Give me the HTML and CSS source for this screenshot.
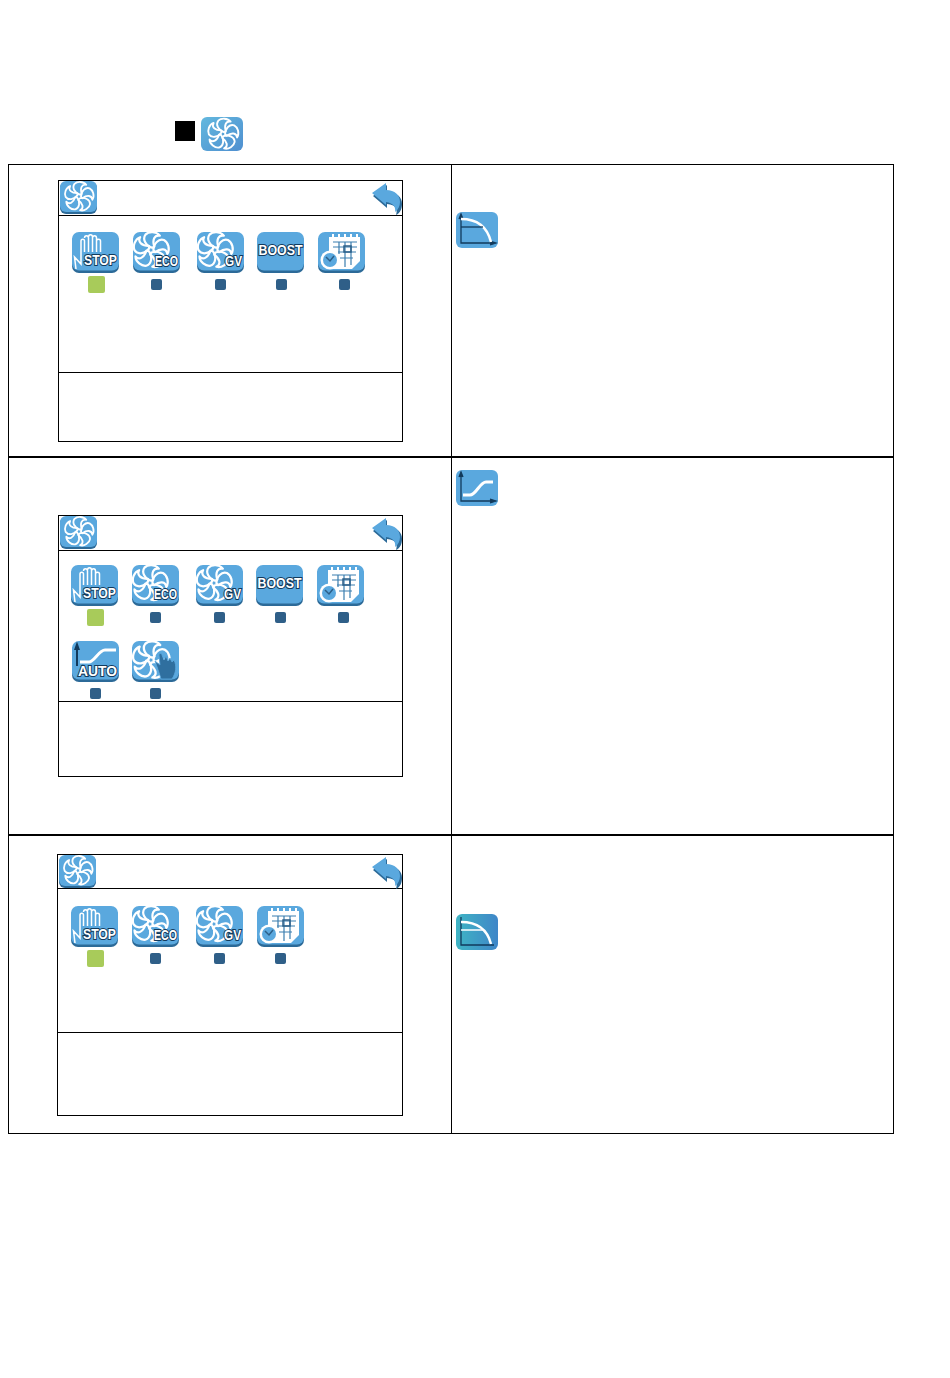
FILE: index.html
```html
<!DOCTYPE html>
<html lang="en">
<head>
<meta charset="utf-8">
<title>Fan modes</title>
<link rel="stylesheet" href="styles.css">
</head>
<body>
<svg class="defs" width="0" height="0" aria-hidden="true">
  <defs>
    <linearGradient id="headGrad" x1="0" y1="0" x2="1" y2="1">
      <stop offset="0" stop-color="#63b8de"/><stop offset="1" stop-color="#4f8fd0"/>
    </linearGradient>
    <linearGradient id="tealGrad" x1="0" y1="0" x2="1" y2="0">
      <stop offset="0" stop-color="#3fb4c4"/><stop offset="1" stop-color="#3f86c8"/>
    </linearGradient>
    <g id="blade"><path d="M1,-2C-5,-4 -8,-10 -5,-14C-2,-17 5,-17 8,-13C3,-14 1,-9 3,-3Z"/></g>
    <g id="fanShape" fill="none" stroke="#fff" stroke-width="2" stroke-linejoin="round">
      <use href="#blade"/>
      <use href="#blade" transform="rotate(72)"/>
      <use href="#blade" transform="rotate(144)"/>
      <use href="#blade" transform="rotate(216)"/>
      <use href="#blade" transform="rotate(288)"/>
    </g>
    <g id="base">
      <rect x="0" y="2" width="47" height="39" rx="7" fill="#2c6a98"/>
      <rect x="0" y="0" width="47" height="38.500" rx="7" fill="#5aa8de"/>
    </g>
    <symbol id="i-head" viewBox="0 0 37 33">
      <rect y="1" width="37" height="32" rx="6" fill="#2c6a98"/>
      <rect width="37" height="31" rx="6" fill="#5aa8de"/>
      <use href="#fanShape" transform="translate(19 15.500) scale(.9)"/>
    </symbol>
    <symbol id="i-stop" viewBox="0 0 47 41">
      <use href="#base"/>
      <path d="M4,37L2.500,25L9,32V9C9,6.500 12.500,6.500 12.500,9V20M12.500,6C12.500,3 16.500,3 16.500,6V20M16.500,5C16.500,2 20.500,2 20.500,5V20M20.500,6C20.500,3 24.500,3 24.500,6V20M24.500,9C24.500,6.500 28.500,6.500 28.500,9V20" fill="none" stroke="#fff" stroke-width="1.500"/>
      <text x="12" y="33" class="ilabel" textLength="33" lengthAdjust="spacingAndGlyphs">STOP</text>
    </symbol>
    <symbol id="i-eco" viewBox="0 0 47 41">
      <use href="#base"/>
      <use href="#fanShape" transform="translate(18 18) scale(1.100)"/>
      <text x="22" y="34" class="ilabel eco" textLength="23" lengthAdjust="spacingAndGlyphs">ECO</text>
    </symbol>
    <symbol id="i-gv" viewBox="0 0 47 41">
      <use href="#base"/>
      <use href="#fanShape" transform="translate(18 18) scale(1.100)"/>
      <text x="28" y="34" class="ilabel eco" textLength="17" lengthAdjust="spacingAndGlyphs">GV</text>
    </symbol>
    <symbol id="i-boost" viewBox="0 0 47 41">
      <use href="#base"/>
      <text x="1.500" y="23" class="ilabel boost" textLength="44" lengthAdjust="spacingAndGlyphs">BOOST</text>
    </symbol>
    <symbol id="i-cal" viewBox="0 0 47 41">
      <use href="#base"/>
      <path d="M11,5H42V29L34,37H14V26L11,24Z" fill="#fff"/>
      <path d="M15,2V7M21,2V7M27,2V7M33,2V7M39,2V7" stroke="#fff" stroke-width="2"/>
      <path d="M15,10H39M15,15H39M20,20H38M22,26H35M21,10V22M27,10V35M33,10V33" stroke="#3b7eaf" stroke-width="1.200"/>
      <rect x="26" y="14" width="7" height="6" fill="none" stroke="#2c5f88" stroke-width="1.500"/>
      <circle cx="12" cy="28" r="9.500" fill="#fff"/>
      <circle cx="12" cy="28" r="7" fill="#5aa8de"/>
      <path d="M8,25L12,29L16,24" fill="none" stroke="#2c5f88" stroke-width="1.500"/>
    </symbol>
    <symbol id="i-auto" viewBox="0 0 47 41">
      <use href="#base"/>
      <path d="M5,0.500L8,9H6V25H4V9H2Z" fill="#123a5c"/>
      <path d="M8,21H17C22,21 27,9 33,9H44" fill="none" stroke="#fff" stroke-width="3"/>
      <text x="6" y="35" class="ilabel" textLength="39" lengthAdjust="spacingAndGlyphs">AUTO</text>
    </symbol>
    <symbol id="i-hand" viewBox="0 0 47 41">
      <use href="#base"/>
      <use href="#fanShape" transform="translate(19 19) scale(1.150)"/>
      <path d="M23,20L28,24L27,14C27,12 30,12 30,14L32,19L34,15L36,20L38,17L40,21L42,19C45,25 44,32 40,38H29C27,31 25,26 23,20Z" fill="#2f6f9f" stroke="#5aa8de" stroke-width=".8"/>
    </symbol>
    <symbol id="i-back" viewBox="0 0 32 33">
      <path d="M16,3V10C26,10 31,15 31,22C31,27 29,31 25,33C27,27 25,23 16,22V26L2,14Z" fill="#2c6a98"/>
      <path d="M15,1V8C24,8 29,13 29,20C29,24 27,28 24,30C25,26 23,21 15,20V23L1,11Z" fill="#5aa8de"/>
    </symbol>
    <g id="axes" fill="none" stroke="#123a5c" stroke-width="1.300">
      <path d="M5,3V31H38"/><path d="M3,7L5,2L7,7M34,29L40,31L34,33" fill="#123a5c"/>
    </g>
    <symbol id="i-curve1" viewBox="0 0 42 36">
      <rect width="42" height="36" rx="6" fill="#5aa8de"/>
      <use href="#axes"/>
      <path d="M5,7C20,7 31,14 35,30" fill="none" stroke="#fff" stroke-width="2.500"/>
      <path d="M5,15H27" stroke="#123a5c" stroke-width="1.300"/>
    </symbol>
    <symbol id="i-curve2" viewBox="0 0 42 36">
      <rect width="42" height="36" rx="6" fill="#5aa8de"/>
      <use href="#axes"/>
      <path d="M7,25H14C20,25 24,12 30,12H37" fill="none" stroke="#fff" stroke-width="3"/>
    </symbol>
    <symbol id="i-curve3" viewBox="0 0 42 36">
      <rect width="42" height="36" rx="6" fill="url(#tealGrad)"/>
      <path d="M5,3V31H38" fill="none" stroke="#123a5c" stroke-width="1.300"/>
      <path d="M5,8C20,8 31,14 35,30" fill="none" stroke="#fff" stroke-width="2.500"/>
      <path d="M5,16H28" stroke="#fff" stroke-width="1.500"/>
    </symbol>
    <symbol id="i-main" viewBox="0 0 42 34">
      <rect width="42" height="34" rx="6" fill="url(#headGrad)"/>
      <use href="#fanShape" transform="translate(22 17) scale(.95)"/>
    </symbol>
  </defs>
</svg>

<div class="title-row">
  <span class="black-box"></span>
  <svg class="main-icon"><use href="#i-main"/></svg>
</div>

<div class="sheet">
  <section class="row row-one">
    <div class="cell cell-left">
      <div class="panel panel-one">
        <header class="panel-head">
          <svg class="head-icon"><use href="#i-head"/></svg>
          <svg class="back-icon"><use href="#i-back"/></svg>
        </header>
        <div class="panel-main main-one">
          <div class="modes">
            <div class="mode"><svg class="mode-icon"><use href="#i-stop"/></svg><span class="led on"></span></div>
            <div class="mode"><svg class="mode-icon"><use href="#i-eco"/></svg><span class="led"></span></div>
            <div class="mode"><svg class="mode-icon"><use href="#i-gv"/></svg><span class="led"></span></div>
            <div class="mode"><svg class="mode-icon"><use href="#i-boost"/></svg><span class="led led-boost"></span></div>
            <div class="mode"><svg class="mode-icon"><use href="#i-cal"/></svg><span class="led led-cal"></span></div>
          </div>
        </div>
        <div class="panel-foot"></div>
      </div>
    </div>
    <div class="cell cell-right right-one"><svg class="curve-icon"><use href="#i-curve1"/></svg></div>
  </section>

  <section class="row row-two">
    <div class="cell cell-left">
      <div class="panel panel-two">
        <header class="panel-head">
          <svg class="head-icon"><use href="#i-head"/></svg>
          <svg class="back-icon"><use href="#i-back"/></svg>
        </header>
        <div class="panel-main main-two">
          <div class="modes">
            <div class="mode"><svg class="mode-icon"><use href="#i-stop"/></svg><span class="led on"></span></div>
            <div class="mode"><svg class="mode-icon"><use href="#i-eco"/></svg><span class="led"></span></div>
            <div class="mode"><svg class="mode-icon"><use href="#i-gv"/></svg><span class="led"></span></div>
            <div class="mode"><svg class="mode-icon"><use href="#i-boost"/></svg><span class="led led-boost"></span></div>
            <div class="mode"><svg class="mode-icon"><use href="#i-cal"/></svg><span class="led led-cal"></span></div>
          </div>
          <div class="modes modes-second">
            <div class="mode"><svg class="mode-icon"><use href="#i-auto"/></svg><span class="led"></span></div>
            <div class="mode"><svg class="mode-icon"><use href="#i-hand"/></svg><span class="led"></span></div>
          </div>
        </div>
        <div class="panel-foot"></div>
      </div>
    </div>
    <div class="cell cell-right right-two"><svg class="curve-icon"><use href="#i-curve2"/></svg></div>
  </section>

  <section class="row row-three">
    <div class="cell cell-left">
      <div class="panel panel-three">
        <header class="panel-head head-three">
          <svg class="head-icon"><use href="#i-head"/></svg>
          <svg class="back-icon"><use href="#i-back"/></svg>
        </header>
        <div class="panel-main main-three">
          <div class="modes modes-four">
            <div class="mode"><svg class="mode-icon"><use href="#i-stop"/></svg><span class="led on"></span></div>
            <div class="mode"><svg class="mode-icon"><use href="#i-eco"/></svg><span class="led"></span></div>
            <div class="mode"><svg class="mode-icon"><use href="#i-gv"/></svg><span class="led"></span></div>
            <div class="mode"><svg class="mode-icon"><use href="#i-cal"/></svg><span class="led"></span></div>
          </div>
        </div>
        <div class="panel-foot"></div>
      </div>
    </div>
    <div class="cell cell-right right-three"><svg class="curve-icon"><use href="#i-curve3"/></svg></div>
  </section>
</div>
</body>
</html>
```

FILE: styles.css
```css
* { box-sizing: border-box; }

html, body { margin: 0; padding: 0; background: #fff; }

body {
  width: 950px;
  height: 1378px;
  overflow: hidden;
  font-family: "Liberation Sans", Arial, sans-serif;
}

.defs { position: absolute; }

.ilabel {
  font-family: "Liberation Sans", Arial, sans-serif;
  font-weight: 700;
  font-size: 15.500px;
  fill: #fff;
  stroke: #123a5c;
  stroke-width: 2.200px;
  paint-order: stroke;
}

.eco { font-size: 14px; }
.boost { font-size: 14px; }

.title-row {
  display: flex;
  align-items: flex-start;
  gap: 6px;
  height: 164px;
  padding: 117px 0 0 175px;
}

.black-box {
  width: 20px;
  height: 20px;
  margin-top: 4px;
  background: #000;
}

.main-icon { width: 42px; height: 34px; }

.sheet {
  width: 886px;
  margin-left: 8px;
  border: 1px solid #000;
}

.row { display: grid; grid-template-columns: 443px 1fr; }
.row + .row { border-top: 2px solid #000; }

.row-one { height: 291px; }
.row-two { height: 378px; }
.row-three { height: 299px; }

.cell-left { border-right: 1px solid #000; }

.cell-right { padding-left: 4px; }
.right-one { padding-top: 47px; }
.right-two { padding-top: 12px; }
.right-three { padding-top: 78px; }

.curve-icon { display: block; width: 42px; height: 36px; }

.panel {
  display: flex;
  flex-direction: column;
  width: 345px;
  height: 262px;
  margin-left: 49px;
  border: 1px solid #000;
}

.panel-one { margin-top: 15px; }
.panel-two { margin-top: 57px; }
.panel-three { margin: 18px 0 0 48px; width: 346px; }

.panel-head {
  display: flex;
  flex: none;
  justify-content: space-between;
  align-items: flex-start;
  height: 35px;
  padding-left: 1px;
  border-bottom: 1px solid #000;
}

.head-three { height: 34px; }

.head-icon { width: 37px; height: 33px; }

.back-icon {
  width: 32px;
  height: 33px;
  margin: 1px -1px -1px 0;
}

.panel-main { flex: none; padding-left: 5px; }
.main-one { height: 156px; padding-top: 16px; }
.main-two { height: 150px; padding-top: 14px; padding-left: 4px; }
.main-three { height: 143px; padding-top: 17px; padding-left: 5px; }

.panel-foot { flex: 1; border-top: 1px solid #000; }

.modes {
  display: grid;
  grid-template-columns: 61px 64px 60px 61px 62px;
}

.modes-four { grid-template-columns: 61px 64px 61px 62px; }

.modes-second {
  grid-template-columns: 60px 62px;
  margin: 18px 0 0 1px;
}

.mode {
  display: flex;
  flex-direction: column;
  align-items: center;
  width: 62px;
}

.mode-icon { display: block; width: 47px; height: 41px; }

.led {
  width: 11px;
  height: 11px;
  margin: 6px 0 0 1px;
  border-radius: 2px;
  background: #2f5f88;
}

.led-boost { margin-left: 3px; }
.led-cal { margin-left: 6px; }

.led.on {
  width: 17px;
  height: 17px;
  margin: 3px 0 -3px 2px;
  background: #a8cb5a;
}
```
